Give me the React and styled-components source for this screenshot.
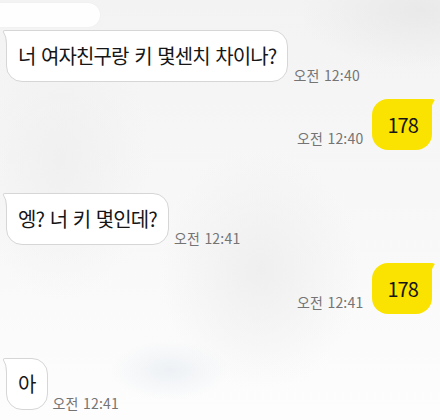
import React from "react";
import styled, { createGlobalStyle } from "styled-components";

const messages = [
	{ id: 1, side: "in", text: "너 여자친구랑 키 몇센치 차이나?", time: "오전 12:40", top: 3 },
	{ id: 2, side: "out", text: "178", time: "오전 12:40", top: 17 },
	{ id: 3, side: "in", text: "엥? 너 키 몇인데?", time: "오전 12:41", top: 43 },
	{ id: 4, side: "out", text: "178", time: "오전 12:41", top: 18 },
	{ id: 5, side: "in", text: "아", time: "오전 12:41", top: 44 },
];

function Tail({ side }) {
	if (side === "out") {
		return (
			<OutTail width="16" height="14" viewBox="0 0 16 14">
				<path d="M0 0 L12 0 Q15 0 14.6 1.6 Q11 6 11 14 L0 14 Z" fill="#fae300" />
			</OutTail>
		);
	}
	return (
		<InTail width="20" height="14" viewBox="0 0 20 14">
			<path d="M20 0.5 L3 0.5 Q0.8 0.5 1.4 2 Q4.5 6 4.5 14 L20 14 Z" fill="#fff" />
			<path
				d="M20 0.5 L3 0.5 Q0.8 0.5 1.4 2 Q4.5 6 4.5 14"
				fill="none"
				stroke="#d6d6d6"
				strokeWidth="1"
			/>
		</InTail>
	);
}

export default function App() {
	return (
		<>
			<GlobalStyle />
			<Screen>
				<Chat>
					<GhostBubble />
					{messages.map((m) => (
						<Row key={m.id} $side={m.side} $top={m.top}>
							{m.side === "out" && <Time $side="out">{m.time}</Time>}
							<Bubble $side={m.side}>
								<Tail side={m.side} />
								<Text>{m.text}</Text>
							</Bubble>
							{m.side === "in" && <Time $side="in">{m.time}</Time>}
						</Row>
					))}
				</Chat>
			</Screen>
		</>
	);
}

const GlobalStyle = createGlobalStyle`
	body {
		margin: 0;
		font-family: "Noto Sans CJK KR", "Noto Sans", sans-serif;
	}
`;

const Screen = styled.div`
	width: 440px;
	height: 420px;
	overflow: hidden;
	background:
		radial-gradient(ellipse 120px 60px at 420px 10px, #e9e9e9, transparent),
		radial-gradient(ellipse 90px 140px at 60px 160px, #f0f0f0, transparent),
		radial-gradient(ellipse 100px 120px at 260px 270px, #efefef, transparent),
		radial-gradient(ellipse 60px 30px at 170px 370px, #edf1f5, transparent),
		linear-gradient(180deg, #f3f3f3 0%, #f8f8f8 55%, #fdfdfd 100%);
`;

const Chat = styled.div`
	display: flex;
	flex-direction: column;
	padding: 0 8px 0 6px;
`;

const GhostBubble = styled.div`
	width: 100px;
	height: 24px;
	margin: 3px 0 0 -6px;
	border-radius: 0 12px 12px 0;
	background: #fefefe;
	box-shadow: 0 0 2px rgba(0, 0, 0, 0.04);
`;

const Row = styled.div`
	display: flex;
	align-items: flex-end;
	justify-content: ${(p) => (p.$side === "out" ? "flex-end" : "flex-start")};
	margin-top: ${(p) => p.$top}px;
`;

const Bubble = styled.div`
	position: relative;
	box-sizing: border-box;
	height: ${(p) => (p.$side === "out" ? 51 : 52)}px;
	padding: ${(p) => (p.$side === "out" ? "0 14px 0 15px" : "0 11px 0 11px")};
	display: flex;
	align-items: center;
	border-radius: 16px;
	border-top-${(p) => (p.$side === "out" ? "right" : "left")}-radius: 6px;
	background: ${(p) => (p.$side === "out" ? "#fae300" : "#ffffff")};
	border: ${(p) => (p.$side === "out" ? "none" : "1px solid #d6d6d6")};
`;

const Text = styled.span`
	position: relative;
	font-size: 20px;
	line-height: 28px;
	letter-spacing: -0.9px;
	word-spacing: 2px;
	color: #161616;
	white-space: nowrap;
`;

const InTail = styled.svg`
	position: absolute;
	left: -5px;
	top: -1px;
`;

const OutTail = styled.svg`
	position: absolute;
	right: -4px;
	top: 0;
`;

const Time = styled.span`
	font-size: 14px;
	line-height: 14px;
	letter-spacing: 0.2px;
	word-spacing: 1px;
	color: #747474;
	white-space: nowrap;
	margin: ${(p) => (p.$side === "out" ? "0 9px 5px 0" : "0 0 0 5px")};
`;
